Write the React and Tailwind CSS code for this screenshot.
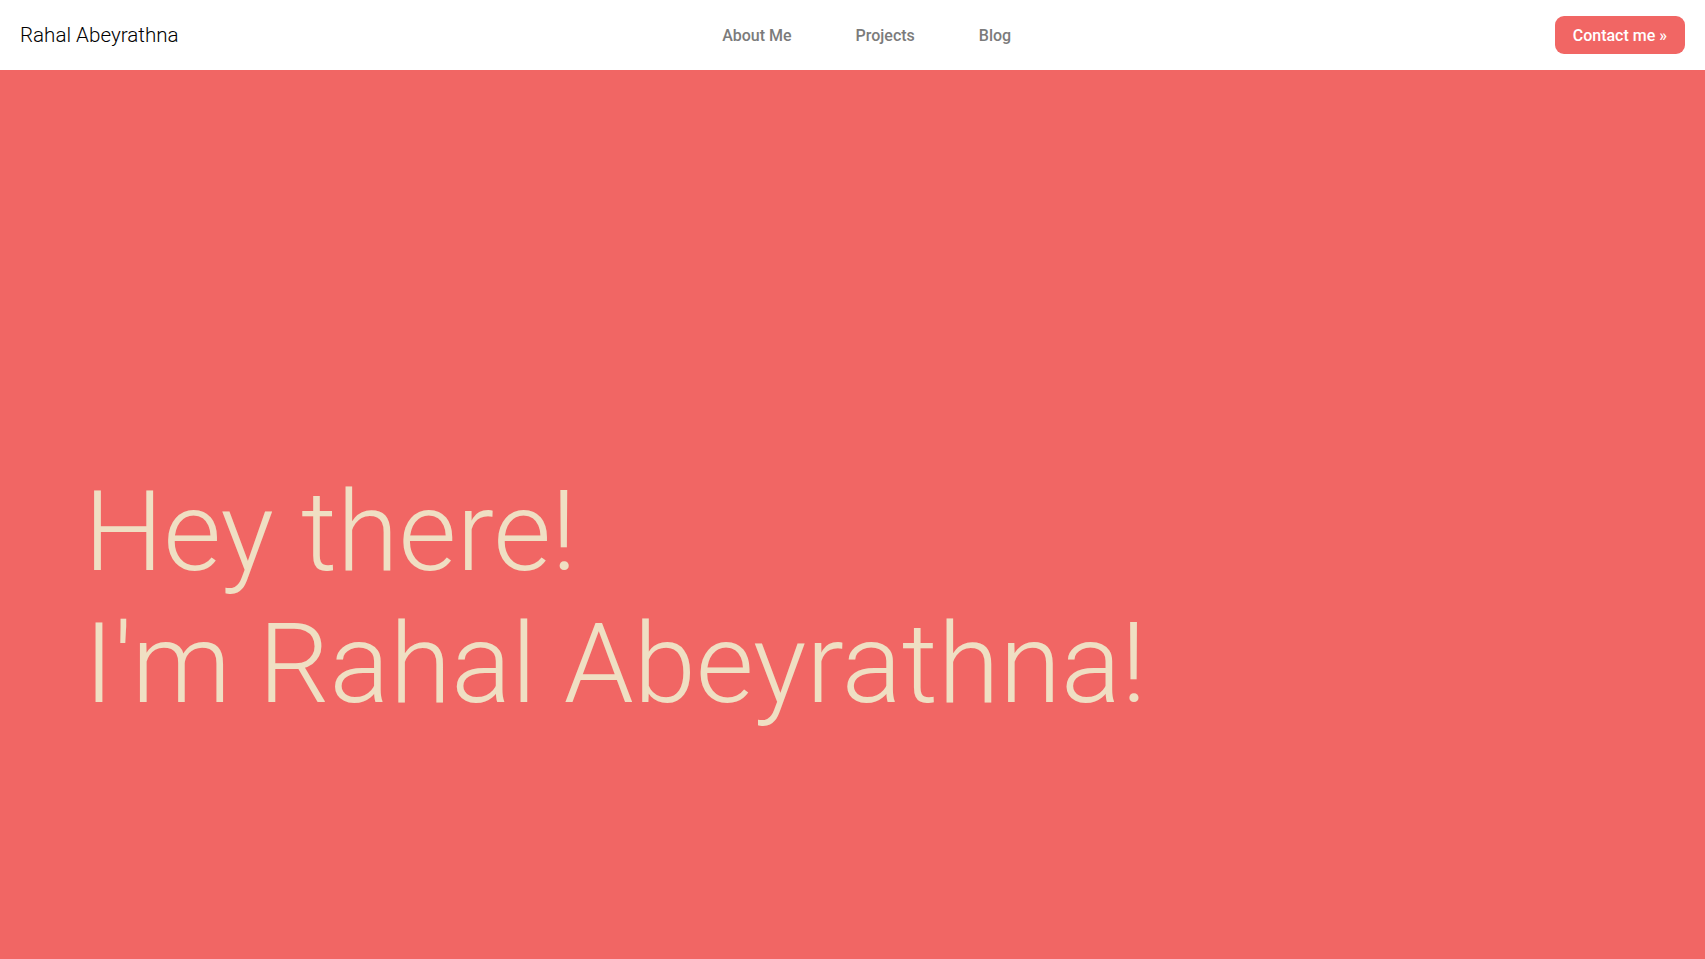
export default function App() {
  return (
    <div className="min-h-screen flex flex-col bg-[#f16664]" style={{ fontFamily: "Roboto, 'Liberation Sans', sans-serif" }}>
      <header className="h-[70px] bg-white flex items-center justify-between px-5">
        <div className="text-[20.6px] font-light text-black leading-none pt-[1px]">Rahal Abeyrathna</div>
        <nav className="flex items-center gap-16 text-[16px] font-medium text-[#7b7b7b] pt-[2px]">
          <a>About Me</a>
          <a>Projects</a>
          <a>Blog</a>
        </nav>
        <button className="bg-[#f16664] text-white text-[16px] font-medium leading-6 px-[18px] pt-[8px] pb-[6px] rounded-[9px]">
          Contact me »
        </button>
      </header>
      <main className="flex-1 pl-[84px] pt-[396px]">
        <h1 className="text-[112px] leading-[132px] font-light text-[#efdfc3]">
          Hey there!
          <br />
          I'm Rahal Abeyrathna!
        </h1>
      </main>
    </div>
  );
}
